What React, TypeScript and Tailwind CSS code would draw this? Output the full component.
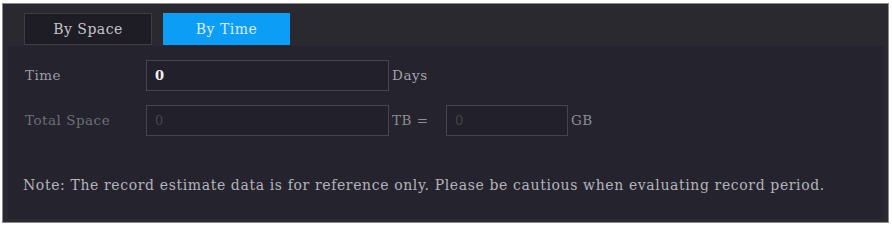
export default function App() {
  return (
    <div className="h-[226px] w-[892px] bg-white pt-[3px] pl-[2px] pr-[3px] pb-[3px] font-['DejaVu_Serif',serif]">
      <div className="flex h-[220px] flex-col border border-[#8a8a8e] bg-[#2a2930]">
        <div className="flex h-[42px] items-end gap-[11px] pl-[21px] pb-[1px]">
          <button className="h-[32px] w-[128px] border border-[#3d3c44] bg-[#1e1d25] text-[14px] tracking-[0.5px] text-[#c4c4c8]">
            By Space
          </button>
          <button className="h-[32px] w-[127px] bg-[#0c9ef6] text-[14px] tracking-[0.5px] text-[#d6ecff]">
            By Time
          </button>
        </div>
        <div className="mx-[5px] mb-[3px] flex flex-1 flex-col bg-[#24232e] pl-[15px] pt-[14px]">
          <div className="flex h-[31px] items-center">
            <span className="w-[123px] pl-[2px] text-[13.5px] tracking-[0.5px] text-[#9c9ca2]">Time</span>
            <div className="flex h-[31px] w-[243px] items-center border border-[#46454f] bg-[#22212b] pl-[8px] text-[13px] font-bold text-[#f0f0f0]">
              0
            </div>
            <span className="pl-[3px] text-[13.5px] tracking-[0.6px] text-[#a2a2a8]">Days</span>
          </div>
          <div className="mt-[14px] flex h-[31px] items-center">
            <span className="w-[123px] pl-[2px] text-[13.5px] tracking-[0.5px] text-[#6f6f76]">Total Space</span>
            <div className="flex h-[31px] w-[243px] items-center border border-[#46454f] bg-[#22212b] pl-[8px] text-[13px] text-[#45444c]">
              0
            </div>
            <span className="w-[57px] pl-[3px] text-[13.5px] tracking-[0.5px] text-[#8e8e95]">TB =</span>
            <div className="flex h-[31px] w-[122px] items-center border border-[#46454f] bg-[#22212b] pl-[8px] text-[13px] text-[#45444c]">
              0
            </div>
            <span className="pl-[3px] text-[13.5px] tracking-[0.5px] text-[#8e8e95]">GB</span>
          </div>
          <p className="mt-[39px] text-[14px] tracking-[0.62px] text-[#b4b4ba]">
            Note: The record estimate data is for reference only. Please be cautious when evaluating record period.
          </p>
        </div>
      </div>
    </div>
  );
}
